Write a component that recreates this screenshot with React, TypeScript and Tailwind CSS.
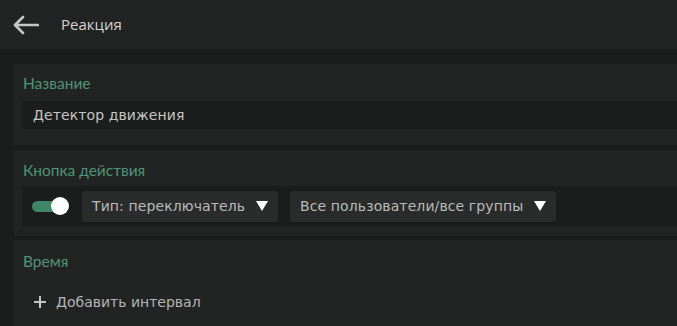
import React from "react";

const titleFont = { fontFamily: '"Open Sans", "Noto Sans", sans-serif' };
const sectionFont = { fontFamily: 'Lato, "Open Sans", sans-serif' };
const bodyFont = { fontFamily: '"DejaVu Sans", "Noto Sans", sans-serif' };

const Caret = () => (
  <svg width="12" height="10" viewBox="0 0 12 10" className="shrink-0">
    <polygon points="0,0 12,0 6,10" fill="#ffffff" />
  </svg>
);

const Dropdown: React.FC<{ label: string }> = ({ label }) => (
  <div
    className="h-[31px] flex items-center gap-[11px] pl-[10px] pr-[10px] rounded-[4px] bg-[#2a2c2c] text-[14px] tracking-[0.1px] text-[#b9bbbb] whitespace-nowrap"
    style={bodyFont}
  >
    <span>{label}</span>
    <Caret />
  </div>
);

const SectionTitle: React.FC<{ children: React.ReactNode }> = ({ children }) => (
  <div className="h-5 leading-5 pl-px text-[15.5px] text-[#4e9479]" style={sectionFont}>
    {children}
  </div>
);

export default function App() {
  return (
    <div className="w-[677px] h-[326px] overflow-hidden bg-[#1b1c1c] flex flex-col">
      {/* Header */}
      <header className="h-[49px] shrink-0 bg-[#222323] flex items-center pl-[12px]">
        <svg width="27" height="20" viewBox="0 0 27 20" fill="none">
          <path
            d="M26 10H3M11 2L3 10L11 18"
            stroke="#c6c6c6"
            strokeWidth="2.6"
            strokeLinecap="round"
            strokeLinejoin="round"
          />
        </svg>
        <span className="ml-[22px] text-[15px] text-[#d4d4d4]" style={titleFont}>
          Реакция
        </span>
      </header>

      <main className="pl-[14px] pt-[15px] flex flex-col">
        {/* Name */}
        <section className="bg-[#222424] pt-[9px] pb-[16px] pl-[8px]">
          <SectionTitle>Название</SectionTitle>
          <div
            className="mt-[8px] h-[28px] bg-[#1c1d1d] flex items-center pl-[11px] text-[14px] tracking-[0.1px] text-[#c4c6c6]"
            style={bodyFont}
          >
            Детектор движения
          </div>
        </section>

        {/* Action button */}
        <section className="mt-[5px] bg-[#222424] pt-[10px] pb-[10px] pl-[8px]">
          <SectionTitle>Кнопка действия</SectionTitle>
          <div className="mt-[6px] h-[40px] bg-[#1b1c1c] flex items-center pl-[10px]">
            <div className="relative w-[37px] h-[18px] flex items-center">
              <div className="w-[30px] h-[11px] rounded-full bg-[#3f8567]" />
              <div className="absolute right-0 top-0 w-[18px] h-[18px] rounded-full bg-white" />
            </div>
            <div className="ml-[13px] flex gap-[12px]">
              <Dropdown label="Тип: переключатель" />
              <Dropdown label="Все пользователи/все группы" />
            </div>
          </div>
        </section>

        {/* Time */}
        <section className="mt-[4px] bg-[#222424] pt-[11px] pl-[8px] h-[100px]">
          <SectionTitle>Время</SectionTitle>
          <div
            className="mt-[21px] h-5 flex items-center pl-[11px] text-[14px] text-[#b4b6b6]"
            style={bodyFont}
          >
            <svg width="14" height="14" viewBox="0 0 14 14" className="mr-[9px]">
              <path d="M7 1V13M1 7H13" stroke="#c8c8c8" strokeWidth="2" />
            </svg>
            Добавить интервал
          </div>
        </section>
      </main>
    </div>
  );
}
